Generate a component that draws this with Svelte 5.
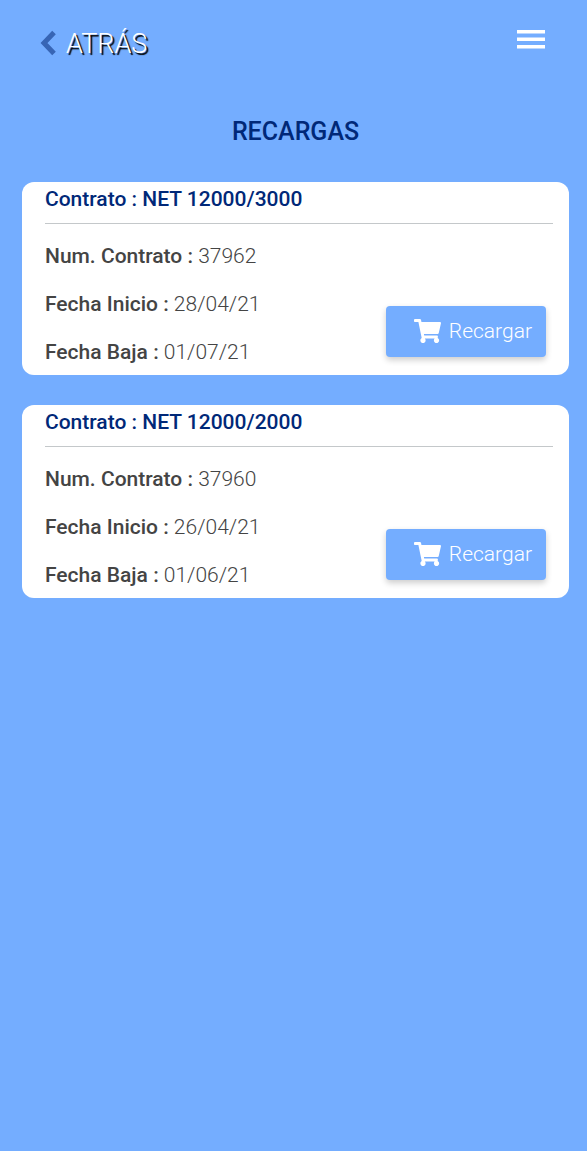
<script lang="ts">
    type Contract = {
        name: string;
        number: string;
        start: string;
        end: string;
    };

    let contracts: Contract[] = [
        { name: 'NET 12000/3000', number: '37962', start: '28/04/21', end: '01/07/21' },
        { name: 'NET 12000/2000', number: '37960', start: '26/04/21', end: '01/06/21' }
    ];
</script>

<header class="topbar">
    <a class="back" href="#inicio">
        <svg class="chevron" viewBox="0 0 16 26" aria-hidden="true">
            <path d="M14 2.5 4 13l10 10.5" />
        </svg>
        <span>ATRÁS</span>
    </a>
    <button class="menu" type="button" aria-label="Menú">
        <svg viewBox="0 0 28 20" aria-hidden="true">
            <path d="M0 1h28v3.400H0zM0 8.500h28v3.400H0zM0 16h28v3.400H0z" />
        </svg>
    </button>
</header>

<main>
    <h1>RECARGAS</h1>

    {#each contracts as contract}
        <section class="card">
            <h2>Contrato : {contract.name}</h2>
            <div class="content">
                <div class="details">
                    <p><strong>Num. Contrato :</strong> {contract.number}</p>
                    <p><strong>Fecha Inicio :</strong> {contract.start}</p>
                    <p><strong>Fecha Baja :</strong> {contract.end}</p>
                </div>
                <button class="recharge" type="button">
                    <svg viewBox="0 0 576 512" aria-hidden="true">
                        <path d="M528.120 301.319l47.273-208C578.806 78.301 567.391 64 551.990 64H159.208l-9.166-44.810C147.758 8.021 137.930 0 126.529 0H24C10.745 0 0 10.745 0 24v16c0 13.255 10.745 24 24 24h69.883l70.248 343.435C147.325 417.100 136 435.222 136 456c0 30.928 25.072 56 56 56s56-25.072 56-56c0-15.674-6.447-29.835-16.824-40h209.647C430.447 426.165 424 440.326 424 456c0 30.928 25.072 56 56 56s56-25.072 56-56c0-22.172-12.888-41.332-31.579-50.405l5.517-24.276c3.413-15.018-8.002-29.319-23.403-29.319H218.117l-6.545-32h293.145c11.206 0 20.920-7.754 23.403-18.681z" />
                    </svg>
                    <span>Recargar</span>
                </button>
            </div>
        </section>
    {/each}
</main>

<style>
    :global(body) {
        background: #74adff;
        font-family: Roboto, "Liberation Sans", sans-serif;
        color: #444;
    }

    button {
        border: 0;
        font: inherit;
        cursor: pointer;
    }

    .topbar {
        display: flex;
        justify-content: space-between;
        align-items: center;
        padding: 24px 42px 20px 40px;
    }

    .back {
        display: flex;
        align-items: center;
        gap: 10px;
        color: #fff;
        font-size: 27px;
        font-weight: 300;
        line-height: 36px;
        text-decoration: none;
        text-shadow: 2px 2px 1px #000;
    }

    .back span {
        padding-top: 2px;
    }

    .chevron {
        width: 16px;
        height: 26px;
        fill: none;
        stroke: #3765b5;
        stroke-width: 5;
    }

    .menu {
        display: flex;
        padding: 0 0 8px;
        background: none;
    }

    .menu svg {
        width: 28px;
        height: 20px;
        fill: #fff;
    }

    main {
        padding: 30px 18px 30px 22px;
    }

    h1 {
        margin: 0 0 30px;
        color: #002878;
        font-size: 25px;
        font-weight: 500;
        line-height: 40px;
        text-align: center;
    }

    .card {
        margin-bottom: 30px;
        padding: 0 16px 7px 23px;
        background: #fff;
        border-radius: 12px;
    }

    h2 {
        margin: 0 0 16px;
        padding-bottom: 7px;
        border-bottom: 1px solid #c4c8ca;
        color: #002878;
        font-size: 21px;
        font-weight: 500;
        line-height: 34px;
    }

    .content {
        display: flex;
        justify-content: space-between;
        align-items: flex-end;
        padding-right: 7px;
    }

    .details {
        display: flex;
        flex-direction: column;
        gap: 16px;
    }

    p {
        margin: 0;
        font-size: 21px;
        font-weight: 300;
        line-height: 32px;
    }

    strong {
        font-weight: 500;
    }

    .recharge {
        display: flex;
        align-items: center;
        gap: 8px;
        margin-bottom: 11px;
        padding: 8px 14px 9px 28px;
        border-radius: 4px;
        background: #74adff;
        box-shadow: 0 3px 6px rgba(0, 0, 0, 0.2);
        color: #fff;
        font-size: 21px;
        font-weight: 300;
        line-height: 34px;
    }

    .recharge svg {
        width: 27px;
        height: 24px;
        fill: #fff;
    }
</style>
